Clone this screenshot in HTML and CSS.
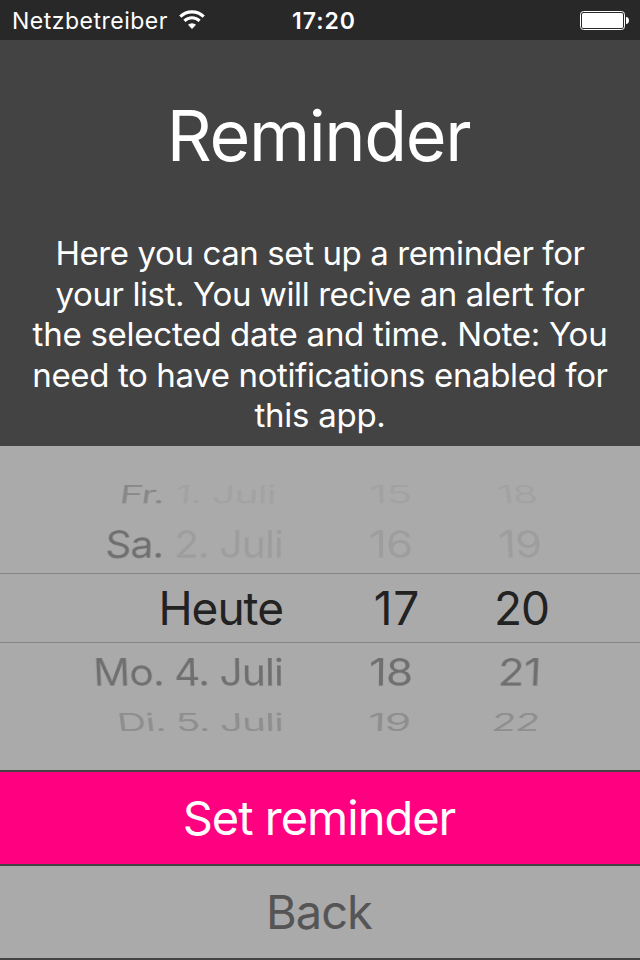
FILE: index.html
```
<!DOCTYPE html>
<html lang="de">
<head>
  <meta charset="UTF-8">
  <title>Reminder</title>
  <meta name="viewport" content="width=device-width, initial-scale=1.0">
  <link rel="stylesheet" href="styles.css">
</head>
<body>
  <header class="statusbar">
    <div class="carrier">
      <span>Netzbetreiber</span>
      <svg class="wifi" width="26" height="20" viewBox="0 0 26 20">
        <path d="M1.3 6.7a16.6 16.6 0 0 1 23.4 0" fill="none" stroke="#fff" stroke-width="3.2"/>
        <path d="M5.4 10.9a10.8 10.8 0 0 1 15.2 0" fill="none" stroke="#fff" stroke-width="3"/>
        <path d="M13 19l-4-4.2a5.8 5.8 0 0 1 8 0z" fill="#fff"/>
      </svg>
    </div>
    <span class="clock">17:20</span>
    <svg class="battery" width="50" height="20" viewBox="0 0 50 20">
      <rect x=".5" y=".5" width="44" height="18" rx="3" fill="none" stroke="#fff"/>
      <rect x="2" y="2" width="41" height="15" rx="1.5" fill="#fff"/>
      <path d="M46 6c4 0 4 7 0 7z" fill="#fff"/>
    </svg>
  </header>

  <main>
    <h1>Reminder</h1>
    <p class="info">
      <span class="l1">Here you can set up a reminder for</span>
      <span class="l2">your list. You will recive an alert for</span>
      <span class="l3">the selected date and time. Note: You</span>
      <span class="l4">need to have notifications enabled for</span>
      <span class="l5">this app.</span>
    </p>
  </main>

  <div class="picker">
    <div class="row far top"><span class="date"><b>Fr.</b> 1. Juli</span><span class="hour">15</span><span class="minute">18</span></div>
    <div class="row near top"><span class="date"><b>Sa.</b> 2. Juli</span><span class="hour">16</span><span class="minute">19</span></div>
    <div class="row selected"><span class="date">Heute</span><span class="hour">17</span><span class="minute">20</span></div>
    <div class="row near bottom"><span class="date">Mo. 4. Juli</span><span class="hour">18</span><span class="minute">21</span></div>
    <div class="row far bottom"><span class="date">Di. 5. Juli</span><span class="hour">19</span><span class="minute">22</span></div>
  </div>

  <button class="btn set">Set reminder</button>
  <button class="btn back">Back</button>
</body>
</html>
```
FILE: styles.css
```
* {
  box-sizing: border-box;
}

body {
  margin: 0;
  height: 960px;
  overflow: hidden;
  display: flex;
  flex-direction: column;
  background: #434343;
  color: #fff;
  font-family: Inter, "Liberation Sans", sans-serif;
}

.statusbar {
  height: 40px;
  padding: 0 10px 0 12px;
  display: grid;
  grid-template-columns: 280px 1fr auto;
  align-items: center;
  background: #282828;
  font-size: 23px;
}

.carrier {
  display: flex;
  align-items: center;
  gap: 11px;
  letter-spacing: 0.5px;
}

.carrier span,
.clock {
  padding-top: 2px;
}

.clock {
  font-weight: 600;
  letter-spacing: 1px;
}

.battery {
  margin-top: 2px;
}

main {
  height: 406px;
  padding-top: 54px;
  text-align: center;
}

h1 {
  margin: 0 0 55px;
  padding-right: 3px;
  font-size: 70px;
  line-height: 84px;
  font-weight: 400;
  letter-spacing: -1.4px;
}

.info {
  margin: 0;
  font-size: 33px;
  line-height: 40.5px;
}

.info span {
  display: block;
  white-space: nowrap;
}

.l1,
.l2 {
  letter-spacing: -0.4px;
}

.l3,
.l5 {
  letter-spacing: -0.25px;
}

.l4 {
  letter-spacing: -0.37px;
}

.picker {
  height: 324px;
  padding-top: 27px;
  background: #aaa;
  color: #222;
  font-size: 46px;
  letter-spacing: -1px;
}

.row {
  height: 70px;
  display: grid;
  grid-template-columns: 283px 224px 29px;
  align-items: center;
  line-height: 56px;
  white-space: nowrap;
}

.date {
  text-align: right;
  transform-origin: right center;
}

.hour,
.minute {
  justify-self: center;
}

.row b {
  font-weight: 400;
}

.selected {
  border-top: 1px solid #858585;
  border-bottom: 1px solid #858585;
}

.selected .hour {
  padding-left: 4px;
  letter-spacing: 1px;
}

.near {
  height: 57px;
  color: #6f6f6f;
}

.far {
  height: 43px;
  color: #8e8e8e;
}

/* rows turn away from the viewer like a drum */
.near.top {
  color: #9d9d9d;
  transform: translateY(-1px) perspective(3500px) rotateX(36deg);
}

.near.bottom {
  transform: perspective(3500px) rotateX(-36deg);
}

.far.top {
  color: #a2a2a2;
  transform: translateY(-4px) perspective(2200px) rotateX(57deg);
}

.far.bottom {
  transform: translateY(-3px) perspective(2200px) rotateX(-57deg);
}

.near .date,
.far .date {
  transform: scaleX(0.885);
}

.far.top .date {
  transform: translateX(-7px) scaleX(0.885);
}

.near .hour {
  transform: translateX(-4px) scaleX(0.96);
}

.far .hour {
  transform: translateX(-5px) scaleX(0.93);
}

.near .minute {
  transform: translateX(-2px) scaleX(0.95);
}

.far .minute {
  transform: translateX(-5px) scaleX(0.88);
}

.near b {
  color: #6f6f6f;
}

.far b {
  color: #888;
}

.btn {
  height: 92px;
  margin: 2px 0 0;
  padding: 0 2px 2px 0;
  border: 0;
  font: 400 47px Inter, "Liberation Sans", sans-serif;
  letter-spacing: -1px;
}

.set {
  background: #ff0080;
  color: #fff;
}

.back {
  background: #aaa;
  color: #555;
}
```
